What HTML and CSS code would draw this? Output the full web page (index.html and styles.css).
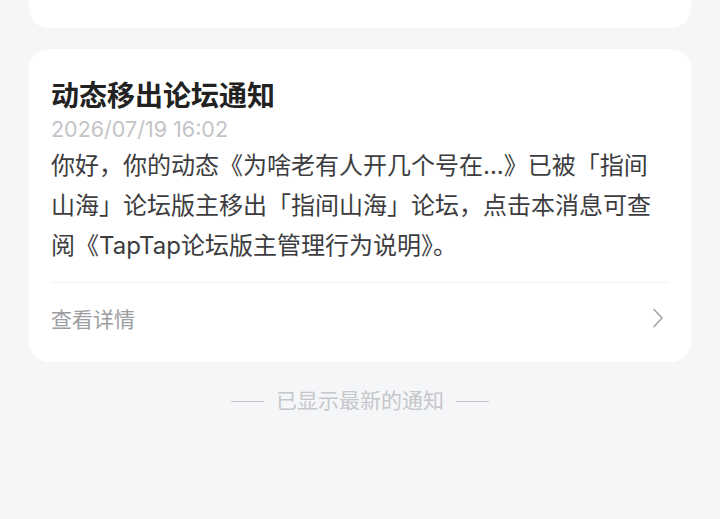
FILE: index.html
```html
<!DOCTYPE html>
<html lang="zh-CN">

<head>
    <meta charset="UTF-8">
    <meta name="viewport" content="width=device-width, initial-scale=1.0">
    <title>通知</title>
    <link rel="stylesheet" href="styles.css">
</head>

<body>
    <div class="list">
        <div class="card card-prev"></div>

        <div class="card">
            <div class="card-body">
                <div class="title">动态移出论坛通知</div>
                <div class="time">2026/07/19 16:02</div>
                <div class="content">你好，你的动态《为啥老有人开几个号在...》已被「指间山海」论坛版主移出「指间山海」论坛，点击本消息可查阅《TapTap论坛版主管理行为说明》。</div>
            </div>
            <div class="detail">
                <span>查看详情</span>
                <svg class="arrow" width="14" height="20" viewBox="0 0 14 20">
                    <polyline points="3,1.5 11,10 3,18.5" fill="none" stroke="#a2a3a8" stroke-width="1.6" stroke-linecap="round" stroke-linejoin="round"/>
                </svg>
            </div>
        </div>

        <div class="end">
            <span class="dash"></span>
            <span>已显示最新的通知</span>
            <span class="dash"></span>
        </div>
    </div>
</body>

</html>
```

FILE: styles.css
```css
body {
    margin: 0;
    background-color: #f5f6f8;
    font-family: Inter, "Noto Sans CJK SC", "Noto Sans", sans-serif;
}

.list {
    padding: 0 29px;
    display: flex;
    flex-direction: column;
}

.card {
    background-color: #fff;
    border-radius: 20px;
    margin-bottom: 21px;
}

.card-prev {
    height: 28px;
    border-radius: 0 0 20px 20px;
}

.card-body {
    padding: 29px 22px 16px;
}

.title {
    font-size: 28px;
    line-height: 36px;
    font-weight: bold;
    color: #222;
}

.time {
    font-size: 21.5px;
    line-height: 30px;
    color: #c3c4c8;
    margin-bottom: 2px;
}

.content {
    font-size: 24px;
    line-height: 40px;
    color: #3d3d3f;
}

.detail {
    margin: 0 22px;
    height: 70px;
    padding-bottom: 9px;
    border-top: 1px solid #f0f1f3;
    display: flex;
    align-items: center;
    justify-content: space-between;
    font-size: 21px;
    color: #9c9da1;
}

.arrow {
    margin-right: 4px;
}

.end {
    margin-top: 4px;
    display: flex;
    align-items: center;
    justify-content: center;
    gap: 12px;
    font-size: 21px;
    line-height: 28px;
    color: #c5c7cb;
}

.dash {
    width: 33px;
    height: 1px;
    background-color: #c5c7cb;
}
```
